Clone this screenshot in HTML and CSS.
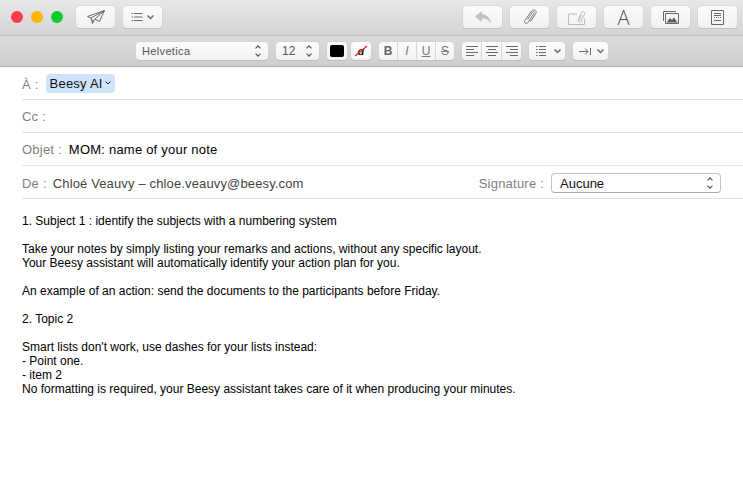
FILE: index.html
```html
<!DOCTYPE html>
<html lang="fr">
	<head>
		<meta charset="utf-8">
		<title>Nouveau message</title>
		<link rel="stylesheet" href="styles.css">
	</head>
	<body>
		<!-- title bar -->
		<div class="titlebar">
			<div class="traffic">
				<span class="light light-red"></span>
				<span class="light light-yellow"></span>
				<span class="light light-green"></span>
			</div>
			<div class="tool-group">
				<button class="tool">
					<svg width="18" height="15" viewBox="0 0 18 15" class="icon"><path d="M.5 6.500 17.500.5 12.500 11.500 8 9 5.500 13.500 4 8Z"/><path d="M4 8 17.500.5 8 9M5.500 13.500 6 9.500"/></svg>
				</button>
				<button class="tool">
					<svg width="24" height="10" viewBox="0 0 24 10" class="icon"><path d="M3 1.500H11.500M3 5H11.500M3 8.500H11.500M.5 1.500H2M.5 5H2M.5 8.500H2"/><path class="heavy" d="M16.500 3.500 19.500 6.500 22.500 3.500"/></svg>
				</button>
			</div>
			<div class="tool-group tool-group-right">
				<button class="tool">
					<svg width="16" height="13" viewBox="0 0 16 13"><path class="fill-off" d="M7 0 0 5.500 7 11V7.500C11 7.500 14 9 16 13 16 7.500 12 3.500 7 3Z"/></svg>
				</button>
				<button class="tool">
					<svg width="14" height="16" viewBox="0 0 14 16" class="icon icon-clip"><path d="M4.500 10.500 9.500 3C10.500 1.800 12 3 11.200 4.200L5 13.500C3.500 15.500.5 13.800 1.800 11.500L8.500 2C10.500-.5 14.500 1.500 12.800 4.500L7.500 12.500"/></svg>
				</button>
				<button class="tool">
					<svg width="18" height="15" viewBox="0 0 18 15" class="icon icon-off"><path d="M9 4H.5V14.500H16.500V9"/><path d="M10 10.500 13.500 2.500C14.500.5 17.500 1.800 16.500 4L13 11.500C12.200 13 10 12 10.800 10.300L13.500 5"/></svg>
				</button>
				<button class="tool tool-letter">A</button>
				<button class="tool">
					<svg width="16" height="13" viewBox="0 0 16 13" class="icon"><path d="M.5 10V.5H13"/><path d="M2.500 2.500H15.500V12.500H2.500Z"/><path class="fill-on" d="M3.500 11.500 7 7 9 9 11 6.500 14.500 11.500Z"/></svg>
				</button>
				<button class="tool">
					<svg width="13" height="15" viewBox="0 0 13 15" class="icon"><path d="M.5.5H12.500V14.500H.5Z"/><path d="M3 3.500H10M3 5.500H10M3 7.500H4M5 7.500H6M7 7.500H8M9 7.500H10M3 10.500H10"/></svg>
				</button>
			</div>
		</div>

		<!-- format bar -->
		<div class="formatbar">
			<div class="fmt fmt-font">Helvetica<span class="updown"></span></div>
			<div class="fmt fmt-size">12<span class="updown"></span></div>
			<div class="swatch-group">
				<div class="fmt fmt-swatch"><span class="swatch-black"></span></div>
				<div class="fmt fmt-swatch">
					<svg width="14" height="14" viewBox="0 0 14 14"><rect width="14" height="14" fill="#fff"/><text x="7" y="11" text-anchor="middle" class="swatch-a">a</text><path d="M1 12 13 2" stroke="#e8192c" stroke-width="1.300"/></svg>
				</div>
			</div>
			<div class="fmt fmt-seg fmt-style">
				<span class="seg seg-b">B</span>
				<span class="seg seg-i">I</span>
				<span class="seg seg-u">U</span>
				<span class="seg seg-s">S</span>
			</div>
			<div class="fmt fmt-seg fmt-align">
				<span class="seg"><svg width="12" height="10" viewBox="0 0 12 10" class="icon"><path d="M0 .5H12M0 3.500H8M0 6.500H12M0 9.500H8"/></svg></span>
				<span class="seg"><svg width="12" height="10" viewBox="0 0 12 10" class="icon"><path d="M0 .5H12M2 3.500H10M0 6.500H12M2 9.500H10"/></svg></span>
				<span class="seg"><svg width="12" height="10" viewBox="0 0 12 10" class="icon"><path d="M0 .5H12M4 3.500H12M0 6.500H12M4 9.500H12"/></svg></span>
			</div>
			<div class="fmt fmt-list">
				<svg width="26" height="11" viewBox="0 0 26 11" class="icon"><path d="M3 .5H10M3 3.500H10M3 6.500H10M3 9.500H10M0 .5H1.500M0 3.500H1.500M0 6.500H1.500M0 9.500H1.500"/><path class="heavy" d="M18.500 3.500 21.500 6.500 24.500 3.500"/></svg>
			</div>
			<div class="fmt fmt-indent">
				<svg width="26" height="9" viewBox="0 0 26 9" class="icon"><path d="M0 4.500H9M6 1.500 9 4.500 6 7.500M11.500 1V8"/><path class="heavy" d="M18.500 2.500 21.500 5.500 24.500 2.500"/></svg>
			</div>
		</div>

		<!-- headers -->
		<div class="headers">
			<div class="row">
				<span class="label">À :</span>
				<span class="token">Beesy AI<svg width="6" height="4" viewBox="0 0 6 4" class="icon token-arrow"><path d="M.5.5 3 3 5.500.5"/></svg></span>
			</div>
			<div class="row row-text">
				<span class="label">Cc :</span>
			</div>
			<div class="row row-text">
				<span class="label">Objet :</span>
				<span class="subject">MOM: name of your note</span>
			</div>
			<div class="row">
				<span class="label">De :</span>
				<span class="from">Chloé Veauvy – chloe.veauvy@beesy.com</span>
				<span class="label label-sign">Signature :</span>
				<div class="sign-select">Aucune<span class="updown"></span></div>
			</div>
		</div>

		<!-- message -->
		<div class="message">
			<p>1. Subject 1 : identify the subjects with a numbering system</p>
			<p>Take your notes by simply listing your remarks and actions, without any specific layout.<br>Your Beesy assistant will automatically identify your action plan for you.</p>
			<p>An example of an action: send the documents to the participants before Friday.</p>
			<p>2. Topic 2</p>
			<p>Smart lists don't work, use dashes for your lists instead:<br>- Point one.<br>- item 2<br>No formatting is required, your Beesy assistant takes care of it when producing your minutes.</p>
		</div>
	</body>
</html>
```

FILE: styles.css
```css
html, body {
	margin: 0;
	padding: 0;
	background: #fff;
	font-family: "Liberation Sans", Arial, sans-serif;
	overflow: hidden;
}

.icon {
	fill: none;
	stroke: #6a6a6a;
	stroke-width: 1;
}
.icon .heavy {
	stroke-width: 1.500;
}
.icon-off {
	stroke: #bcbcbc;
}
.icon-clip {
	stroke: #7c7c7c;
}
.fill-off {
	fill: #c2c2c2;
}
.fill-on {
	fill: #5c5c5c;
	stroke: none;
}

/* title bar */
.titlebar {
	height: 29px;
	display: flex;
	align-items: flex-start;
	padding: 6px 6px 0 11px;
	background: linear-gradient(#e9e7e9, #d5d3d5);
	border-bottom: 1px solid #bfbdbf;
}
.traffic {
	display: flex;
	gap: 8px;
	margin-top: 5px;
	width: 65px;
}
.light {
	width: 12px;
	height: 12px;
	border-radius: 50%;
}
.light-red { background: #fc3d4b; }
.light-yellow { background: #fdb500; }
.light-green { background: #0bcb2b; }

.tool-group {
	display: flex;
	gap: 8px;
}
.tool-group-right {
	margin-left: auto;
}
.tool {
	width: 39px;
	height: 22px;
	padding: 0;
	display: flex;
	align-items: center;
	justify-content: center;
	background: linear-gradient(#fbfbfb, #f2f1f2);
	border: 0;
	border-radius: 4px;
	box-shadow: 0 0 0 .5px #cfcdcf, 0 1px 0 #b9b7b9;
}
.tool-letter {
	font-family: "Open Sans", sans-serif;
	font-weight: 300;
	font-size: 20px;
	color: #555;
}

/* format bar */
.formatbar {
	height: 31px;
	display: flex;
	align-items: center;
	gap: 8px;
	padding-left: 136px;
	box-sizing: border-box;
	background: linear-gradient(#dcdadc, #cfcdcf);
	border-bottom: 1px solid #b0aeb0;
}
.fmt {
	height: 18px;
	display: flex;
	align-items: center;
	box-sizing: border-box;
	background: linear-gradient(#fdfdfd, #f3f2f3);
	border-radius: 4px;
	box-shadow: 0 0 0 .5px #cfcdcf, 0 1px 0 #b3b1b3;
	font-size: 11px;
	color: #555;
	position: relative;
}
.fmt-font {
	width: 132px;
	padding-left: 6px;
	letter-spacing: .35px;
}
.fmt-size {
	width: 43px;
	padding-left: 6px;
	font-size: 12px;
}
.swatch-group {
	display: flex;
	gap: 4px;
}
.fmt-swatch {
	width: 20px;
	justify-content: center;
}
.swatch-black {
	width: 14px;
	height: 12px;
	background: #000;
	border-radius: 2px;
}
.swatch-a {
	font-family: "Liberation Serif", serif;
	font-style: italic;
	font-size: 13px;
	font-weight: bold;
	fill: #222;
}
.fmt-seg {
	overflow: hidden;
}
.fmt-style {
	width: 75px;
}
.fmt-align {
	width: 59px;
}
.seg {
	flex: 1;
	height: 18px;
	display: flex;
	align-items: center;
	justify-content: center;
	border-left: 1px solid #d9d7d9;
	box-sizing: border-box;
	font-size: 12px;
	color: #777;
}
.seg:first-child {
	border-left: 0;
}
.seg-b { font-weight: bold; color: #666; }
.seg-i { font-style: italic; }
.seg-u { text-decoration: underline; }
.seg-s { text-decoration: line-through; }
.fmt-list {
	width: 36px;
	padding-left: 7px;
}
.fmt-indent {
	width: 35px;
	padding-left: 6px;
}

/* up and down arrows of a select */
.updown {
	position: absolute;
	right: 6px;
	top: 50%;
	width: 7px;
	height: 10px;
	margin-top: -5px;
}
.updown::before, .updown::after {
	content: "";
	position: absolute;
	left: 1px;
	width: 4px;
	height: 4px;
	border-left: 1.300px solid #444;
	border-top: 1.300px solid #444;
	box-sizing: border-box;
	transform: rotate(45deg);
}
.updown::before { top: 0; }
.updown::after {
	bottom: 0;
	transform: rotate(225deg);
}

/* headers */
.headers {
	padding-left: 22px;
	font-size: 13px;
	letter-spacing: .22px;
}
.row {
	height: 33px;
	padding-top: 2px;
	box-sizing: border-box;
	border-bottom: 1px solid #e3e3e3;
	display: flex;
	align-items: center;
}
.row-text {
	padding-top: 0;
}
.label {
	color: #7f7f7f;
	margin-right: 7px;
}
.token {
	display: flex;
	align-items: center;
	height: 19px;
	padding: 0 4px;
	margin-bottom: 2px;
	background: #cfe3fb;
	border-radius: 4px;
	color: #111;
}
.token-arrow {
	margin-left: 2px;
	stroke: #222;
}
.subject {
	color: #000;
}
.from {
	color: #444;
	letter-spacing: .14px;
	margin-left: -1px;
}
.label-sign {
	margin-left: auto;
}
.sign-select {
	width: 170px;
	height: 20px;
	margin-right: 22px;
	padding-left: 8px;
	box-sizing: border-box;
	display: flex;
	align-items: center;
	background: #fff;
	border: 1px solid #c4c4c4;
	border-bottom-color: #a8a8a8;
	border-radius: 4px;
	color: #111;
	letter-spacing: 0;
	position: relative;
}

/* message */
.message {
	padding: 15px 0 0 22px;
	font-size: 12px;
	line-height: 14px;
	color: #000;
}
.message p {
	margin: 0 0 14px;
}
```
